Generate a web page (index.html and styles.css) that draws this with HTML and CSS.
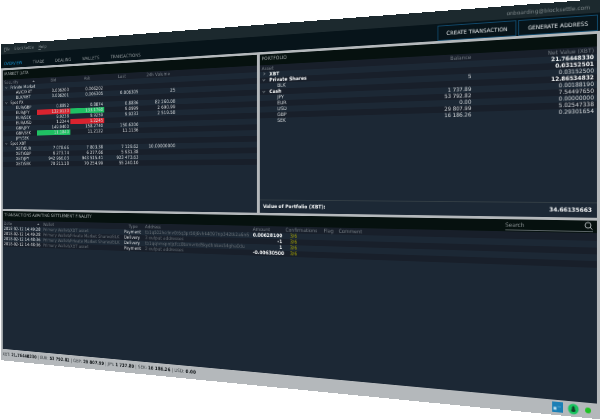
FILE: index.html
```
<!DOCTYPE html>
<html lang="en">
<head>
<meta charset="utf-8">
<title>BlockSettle Terminal</title>
<link rel="stylesheet" href="styles.css">
</head>
<body>
<div class="scene">
<div class="plane">
<div class="window">
  <header class="menubar">
    <nav class="menus">
      <a href="#"><u>F</u>ile</a>
      <a href="#">BlockSettle</a>
      <a href="#"><u>H</u>elp</a>
    </nav>
    <span class="user">onboarding@blocksettle.com</span>
  </header>
  <div class="toolbar">
    <nav class="tabs">
      <a class="active" href="#">OVERVIEW</a>
      <a href="#">TRADE</a>
      <a href="#">DEALING</a>
      <a href="#">WALLETS</a>
      <a href="#">TRANSACTIONS</a>
    </nav>
    <div class="actions">
      <button type="button">CREATE TRANSACTION</button>
      <button type="button">GENERATE ADDRESS</button>
    </div>
  </div>
  <main class="panels">
    <section class="panel">
      <h2>MARKET DATA</h2>
      <table class="market">
        <colgroup><col class="c-name"><col class="c-price"><col class="c-price"><col class="c-price"><col class="c-price"><col></colgroup>
        <thead><tr><th class="sorted">Security <i class="sort"></i></th><th>Bid</th><th>Ask</th><th>Last</th><th>24h Volume</th><th></th></tr></thead>
        <tbody>
          <tr><td class="group"><i class="open"></i>Private Market</td><td></td><td></td><td></td><td></td><td></td></tr>
          <tr><td>AVIC/XBT</td><td>0.006200</td><td>0.006202</td><td></td><td></td><td></td></tr>
          <tr><td>BLK/XBT</td><td>0.006201</td><td>0.006305</td><td>0.006305</td><td>25</td><td></td></tr>
          <tr><td class="group"><i class="open"></i>Spot FX</td><td></td><td></td><td></td><td></td><td></td></tr>
          <tr><td>EUR/GBP</td><td>0.8852</td><td>0.8874</td><td>0.8836</td><td>82 260.08</td><td></td></tr>
          <tr><td>EUR/JPY</td><td class="down">132.9130</td><td class="up">133.1760</td><td>9.0999</td><td>2 690.99</td><td></td></tr>
          <tr><td>EUR/SEK</td><td>9.9238</td><td>9.9259</td><td>9.9233</td><td>2 519.58</td><td></td></tr>
          <tr><td>EUR/USD</td><td>1.2244</td><td class="down">1.2245</td><td></td><td></td><td></td></tr>
          <tr><td>GBP/JPY</td><td>149.9400</td><td>158.2740</td><td>150.6200</td><td></td><td></td></tr>
          <tr><td>GBP/SEK</td><td class="up">11.1840</td><td>11.2122</td><td>11.1136</td><td></td><td></td></tr>
          <tr><td>JPY/SEK</td><td></td><td></td><td></td><td></td><td></td></tr>
          <tr><td class="group"><i class="open"></i>Spot XBT</td><td></td><td></td><td></td><td></td><td></td></tr>
          <tr><td>XBT/EUR</td><td>7 078.66</td><td>7 803.38</td><td>7 129.62</td><td>10.00000000</td><td></td></tr>
          <tr><td>XBT/GBP</td><td>6 273.74</td><td>6 277.66</td><td>5 931.38</td><td></td><td></td></tr>
          <tr><td>XBT/JPY</td><td>942 966.03</td><td>943 515.41</td><td>923 473.63</td><td></td><td></td></tr>
          <tr><td>XBT/SEK</td><td>70 211.18</td><td>70 254.99</td><td>55 240.10</td><td></td><td></td></tr>
        </tbody>
      </table>
    </section>
    <section class="panel">
      <h2>PORTFOLIO</h2>
      <table class="portfolio">
        <thead><tr><th>Asset</th><th>Balance</th><th>Net Value (XBT)</th></tr></thead>
        <tbody>
          <tr class="total"><td class="group"><i class="closed"></i>XBT</td><td></td><td>21.76448330</td></tr>
          <tr class="total"><td class="group"><i class="open"></i>Private Shares</td><td></td><td>0.03152501</td></tr>
          <tr><td>BLK</td><td>5</td><td>0.03152500</td></tr>
          <tr class="total"><td class="group"><i class="open"></i>Cash</td><td></td><td>12.86534832</td></tr>
          <tr><td>JPY</td><td>1 737.89</td><td>0.00188190</td></tr>
          <tr><td>EUR</td><td>53 792.82</td><td>7.54497650</td></tr>
          <tr><td>USD</td><td>0.00</td><td>0.00000000</td></tr>
          <tr><td>GBP</td><td>29 807.99</td><td>5.02547338</td></tr>
          <tr><td>SEK</td><td>16 186.26</td><td>0.29301654</td></tr>
        </tbody>
      </table>
      <footer class="sum"><span>Value of Portfolio (XBT):</span><span>34.66135663</span></footer>
    </section>
  </main>
  <section class="panel ledger">
    <div class="ledger-head">
      <h2>TRANSACTIONS AWAITING SETTLEMENT FINALITY</h2>
      <label class="search">
        <input type="search" placeholder="Search" aria-label="Search">
        <svg viewBox="0 0 18 18" width="18" height="18"><circle cx="8" cy="8" r="6"/><path d="M12 12l5 5"/></svg>
      </label>
    </div>
    <table class="transactions">
      <colgroup><col class="c-date"><col class="c-wallet"><col class="c-type"><col class="c-address"><col class="c-amount"><col class="c-conf"><col class="c-flag"><col></colgroup>
      <thead><tr><th class="sorted">Date <i class="sort"></i></th><th>Wallet</th><th class="mid">Type</th><th>Address</th><th>Amount</th><th>Confirmations</th><th>Flag</th><th>Comment</th></tr></thead>
      <tbody>
        <tr><td>2018-02-12 14:49:28</td><td>Primary Wallet/XBT asset</td><td>Payment</td><td>tb1q502hcdnv0t6q3pr50j6vh44097np342tk2a6n6</td><td>0.00628100</td><td>3/6</td><td></td><td></td></tr>
        <tr><td>2018-02-12 14:49:28</td><td>Primary Wallet/Private Market Shares/BLK</td><td>Delivery</td><td>3 output addresses</td><td>-1</td><td>3/6</td><td></td><td></td></tr>
        <tr><td>2018-02-12 14:48:36</td><td>Primary Wallet/Private Market Shares/BLK</td><td>Delivery</td><td>tb1qqhmspntjcfcc8tsmvntd5kydhnkes54gha0du</td><td>1</td><td>3/6</td><td></td><td></td></tr>
        <tr><td>2018-02-12 14:48:36</td><td>Primary Wallet/XBT asset</td><td>Payment</td><td>2 output addresses</td><td>-0.00630500</td><td>3/6</td><td></td><td></td></tr>
        <tr class="blank"><td></td><td></td><td></td><td></td><td></td><td></td><td></td><td></td></tr>
      </tbody>
    </table>
  </section>
  <footer class="status">
    <p>XBT: <b>21.76448330</b> | EUR: <b>53 792.82</b> | GBP: <b>29 807.99</b> | JPY: <b>1 737.89</b> | SEK: <b>16 186.26</b> | USD: <b>0.00</b></p>
    <div class="lights">
      <svg viewBox="0 0 22 22" width="22" height="22"><path fill="#1c7fb5" d="M0 0h22v22H0z"/><path fill="#b8e0f2" d="M3 11h6v6H3z"/><path fill="#4aa3d0" d="M11 9h7v2h-7z"/></svg>
      <svg viewBox="0 0 24 24" width="24" height="24"><circle cx="12" cy="12" r="11" fill="#19c45f"/><path fill="#12402a" d="M12 5l3 4v3l2 4-3 2h-4l-3-2 2-4V9z"/></svg>
      <svg viewBox="0 0 16 16" width="16" height="16"><circle cx="8" cy="8" r="6" fill="#1fc224"/></svg>
    </div>
  </footer>
</div>
</div>
</div>
</body>
</html>
```
FILE: styles.css
```
* { box-sizing: border-box; }

html, body {
  height: 100%;
  margin: 0;
  background: #fff;
}

.scene {
  width: 100%;
  height: 100%;
  overflow: clip;
}

/* The whole terminal window is shown as a plane turned away on its left side. */
.plane {
  width: 100%;
  transform-origin: 0 0;
  transform: matrix3d(0.5614, -0.0565, 0, -0.0003106, 0, 0.7242, 0, 0, 0, 0, 1, 0, 1, 44.5, 0, 1);
}

.window {
  zoom: 0.5;
  display: flex;
  flex-direction: column;
  width: 267vw;
  height: 208vh;
  background: #b4b8bb;
  color: #d3d7da;
  font: 12px/14px "DejaVu Sans", sans-serif;
  text-rendering: geometricPrecision;
}

a { color: inherit; text-decoration: none; }

.menubar {
  display: flex;
  justify-content: space-between;
  align-items: center;
  height: 28px;
  padding: 0 20px 0 11px;
  background: #1c292e;
  color: #7d8689;
}
.menus { display: flex; gap: 16px; }
.user { padding-top: 6px; }

.toolbar {
  display: flex;
  justify-content: space-between;
  align-items: flex-end;
  height: 38px;
  padding: 0 4px 0 11px;
  background: #07141a;
}
.tabs { display: flex; gap: 36px; padding-bottom: 5px; color: #899093; }
.tabs .active { color: #1387c0; }
.actions { display: flex; gap: 4px; }
.actions button {
  height: 34px;
  padding: 0 18px;
  border: 2px solid #10486a;
  background: #07141a;
  color: #e4e8ea;
  font: inherit;
}

.panels {
  display: grid;
  grid-template-columns: 1fr 1fr;
  gap: 8px;
  height: 394px;
  padding: 6px;
}
.panel {
  display: flex;
  flex-direction: column;
  min-width: 0;
  background: #1c2835;
}
h2 {
  height: 26px;
  margin: 0;
  padding: 0 6px;
  background: #06110f;
  color: #a3a9aa;
  font: inherit;
  line-height: 24px;
}

table {
  width: 100%;
  border-collapse: collapse;
  table-layout: fixed;
}
th, td {
  height: 14px;
  padding: 0 4px;
  overflow: hidden;
  font-weight: normal;
  text-align: left;
  white-space: nowrap;
}
th { height: 16px; padding: 0 6px; color: #757d84; }
tbody tr { background: #1c2835; }
thead tr, tbody tr:nth-child(even) { background: #181f2a; }
.total td { font-weight: bold; color: #f2f4f5; }

.market th + th { text-align: center; }
.market td + td { text-align: right; }
.market td:first-child { padding-left: 47px; }
.c-name { width: 120px; }
.c-price { width: 111px; }
.up { background: #1fc163; }
.down { background: #d8232f; }

.portfolio th, .portfolio td { padding: 0 6px; }
.portfolio th:nth-child(1) { width: 35%; }
.portfolio th:nth-child(2) { width: 32%; }
.portfolio th + th, .portfolio td + td { text-align: right; }
.portfolio td:first-child { padding-left: 48px; }
.market td.group, .portfolio td.group { padding-left: 9px; }

.open, .closed {
  display: inline-block;
  width: 6px;
  height: 6px;
  margin: 0 12px 2px 0;
  border: solid #6b747b;
  border-width: 0 2px 2px 0;
  transform: rotate(45deg);
}
.closed { transform: rotate(-45deg); }
.sorted { position: relative; }
.sort {
  position: absolute;
  right: 8px;
  top: 5px;
  border: 4px solid transparent;
  border-top: 0;
  border-bottom-color: #8b9298;
}

.sum {
  display: flex;
  justify-content: space-between;
  align-items: center;
  height: 32px;
  margin-top: auto;
  padding: 0 10px;
  border-top: 2px solid #333e45;
  color: #f2f4f5;
  font-weight: bold;
}

.ledger { flex: 1; margin: 0 6px; }
.ledger-head {
  display: flex;
  justify-content: space-between;
  background: #06110f;
}
.search {
  display: flex;
  align-items: center;
  width: 184px;
  height: 24px;
  margin-right: 8px;
  border-bottom: 2px solid #5b6466;
}
.search input {
  flex: 1;
  min-width: 0;
  padding: 0;
  border: 0;
  background: none;
  color: #d3d7da;
  font: inherit;
}
.search input::placeholder { color: #8d9496; opacity: 1; }
.search svg { fill: none; stroke: #a8aeb0; stroke-width: 2; }

.transactions th.mid { text-align: center; }
.transactions th { padding: 0 4px; }
.c-date { width: 136px; }
.c-wallet { width: 264px; }
.c-type { width: 65px; }
.c-address { width: 312px; }
.c-amount { width: 88px; }
.c-conf { width: 100px; }
.c-flag { width: 38px; }
.transactions td:nth-child(2), .transactions td:nth-child(4) { color: #646c73; }
.transactions td:nth-child(5) { text-align: right; font-weight: bold; color: #f2f4f5; }
.transactions td:nth-child(6) { padding-left: 16px; color: #a8a500; }

.status {
  display: flex;
  justify-content: space-between;
  align-items: center;
  height: 32px;
  padding: 0 16px 0 6px;
  color: #33393d;
}
.status p { margin: 0; }
.status b { color: #101518; }
.lights { display: flex; align-items: center; gap: 10px; }
```
